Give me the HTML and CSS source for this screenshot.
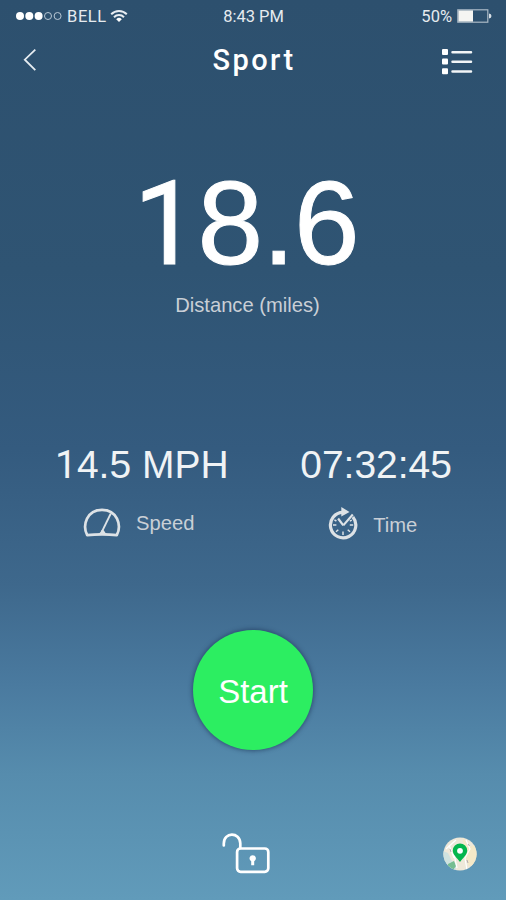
FILE: index.html
```html
<!DOCTYPE html>
<html lang="en">
<head>
    <meta charset="UTF-8">
    <meta name="viewport" content="width=device-width, initial-scale=1.0">
    <title>Sport</title>
    <link rel="stylesheet" href="styles.css">
</head>
<body>
    <div class="status-bar">
        <div class="carrier">
            <svg class="signal" viewBox="0 0 48 10">
                <g fill="#fff"><circle cx="5" cy="5" r="4"/><circle cx="14.3" cy="5" r="4"/><circle cx="23.6" cy="5" r="4"/></g>
                <g fill="none" stroke="#b9c8d5"><circle cx="33" cy="5" r="3.5"/><circle cx="42.6" cy="5" r="3.5"/></g>
            </svg>
            <span class="carrier-name">BELL</span>
            <svg class="wifi" viewBox="0 0 18 14" fill="none" stroke="#e8edf2" stroke-width="2">
                <path d="M1.2 5.2a11 11 0 0 1 15.6 0M4 8.2a7 7 0 0 1 10 0"/>
                <path d="M9 13L6.2 10.2a4 4 0 0 1 5.6 0z" fill="#fff" stroke="none"/>
            </svg>
        </div>
        <span class="clock">8:43 PM</span>
        <div class="power">
            <span>50%</span>
            <svg class="battery" viewBox="0 0 35 14">
                <rect x=".8" y=".8" width="30" height="12.4" fill="none" stroke="#aab9c6" stroke-width="1.2"/>
                <rect x="1.4" y="1.4" width="14.6" height="11.2" fill="#f5f5f2"/>
                <path d="M32 4.5a2.5 2.5 0 0 1 0 5z" fill="#d5dde4"/>
            </svg>
        </div>
    </div>

    <header>
        <svg class="back" viewBox="0 0 14 24"><path d="M12.3 1.6L1.8 11.7l10.5 10.5" fill="none" stroke="#e6ecf1" stroke-width="1.8"/></svg>
        <h1>Sport</h1>
        <svg class="menu" viewBox="0 0 31 26" fill="#fff">
            <rect x="0" y="0" width="6" height="6" rx="1"/><rect x="0" y="9.5" width="6" height="6" rx="1"/><rect x="0" y="19.2" width="6" height="6" rx="1"/>
            <path d="M10.5 3.2h18.5M10.5 12.8h18.5M10.5 22.5h18.5" stroke="#f2f5f7" stroke-width="2.5" stroke-linecap="round"/>
        </svg>
    </header>

    <main>
        <section class="distance">
            <div class="distance-value"><span class="one">1</span>8.6</div>
            <div class="label">Distance (miles)</div>
        </section>

        <section class="stats">
            <div class="stat speed">
                <div class="stat-value"><span class="one">1</span>4.5 MPH</div>
                <div class="stat-label">
                    <svg class="gauge" viewBox="0 0 38 30" fill="none" stroke="#dde2e6" stroke-width="2.7" stroke-linejoin="round">
                        <path d="M19 26.3Q11 26.3 4.2 27.2C-1 17 4 1.8 19 1.8S39 17 33.8 27.2Q27 26.3 19 26.3z"/>
                        <path d="M27.8 5.5L19 23.5" stroke-width="1.8"/>
                        <path d="M13 26.8Q17.5 25.5 18.4 22.2h2.4Q22 25.5 25.5 26.8z" fill="#dde2e6" stroke="none"/>
                    </svg>
                    <span>Speed</span>
                </div>
            </div>
            <div class="stat time">
                <div class="stat-value">07:32:45</div>
                <div class="stat-label">
                    <svg class="stopwatch" viewBox="0 0 30 34" fill="none" stroke="#dde2e6">
                        <path d="M15 5.4A12.7 12.7 0 1 0 24.9 10" stroke-width="3.2"/>
                        <path d="M13.3 0l8.2 5-8.2 4.6z" fill="#dde2e6" stroke="none"/>
                        <path d="M15.3 18.4L10.1 11.5M15.3 18.4L24.8 7.5" stroke-width="2.2"/>
                        <path d="M5 18h3.4M21.8 18h3.4M15 24.5V28M8 24.8l2.3-2M22 24.8l-2.3-2M6.4 12.8l2 1.2M23.8 13.2l-2 1" stroke-width="1.5"/>
                    </svg>
                    <span>Time</span>
                </div>
            </div>
        </section>

        <button class="start" type="button">Start</button>
    </main>

    <footer>
        <svg class="lock" viewBox="0 0 50 42" fill="none" stroke="#fff" stroke-width="2.7">
            <path d="M2.8 12.5v-2C2.8-1.3 18.8-1.3 19.3 10.2V15" stroke-linecap="round"/>
            <rect x="16.1" y="15.5" width="31.2" height="23.3" rx="3.5"/>
            <path d="M31.7 22.2a3.2 3.2 0 0 1 1.5 6v4h-3v-4a3.2 3.2 0 0 1 1.5-6z" fill="#fff" stroke="none"/>
        </svg>
        <svg class="map" viewBox="0 0 34 34">
            <clipPath id="disc"><circle cx="17" cy="17" r="16.6"/></clipPath>
            <g clip-path="url(#disc)">
                <rect width="34" height="34" fill="#eee8d9"/>
                <path d="M20 0l6 10 8-3v20l-8 2-5-9z" fill="#f5e9c8"/>
                <path d="M0 14l5 2 4 8 5 3-2 7H0z" fill="#cfe2df"/>
                <path d="M5 27l6-3 2 5-3 4-6-2z" fill="#75bd91"/>
                <path d="M3 12l10-9M23 3l4 9-5 9 2 12M11 17l3 14M6 8l5 13" fill="none" stroke="#fff" stroke-width="1.2"/>
                <path d="M25 7l1.5 2M24 23l1 3M7 12l1 3" fill="none" stroke="#b5acb2"/>
            </g>
            <path d="M17 25C14 21 9.8 17.8 9.8 13.6a7.2 7.2 0 0 1 14.4 0C24.2 17.8 20 21 17 25z" fill="#05b64d"/>
            <circle cx="17" cy="13.8" r="2.9" fill="#fff"/>
        </svg>
    </footer>
</body>
</html>
```
FILE: styles.css
```css
* {
    box-sizing: border-box;
}

body {
    margin: 0;
    width: 506px;
    height: 900px;
    overflow: hidden;
    display: flex;
    flex-direction: column;
    font-family: "Liberation Sans", Arial, sans-serif;
    color: white;
    background: linear-gradient(#2d506e 0%, #2f5473 30%, #345b7f 50%, #3e688c 65%, #4a7a9f 76%, #568cad 86%, #619bba 100%);
}

svg {
    display: block;
    flex: none;
}

.status-bar {
    height: 32px;
    padding: 0 14px 0 15px;
    display: grid;
    grid-template-columns: 1fr auto 1fr;
    align-items: center;
    font-family: Roboto, sans-serif;
    font-size: 16.5px;
    color: #e6ebef;
}

.carrier,
.power {
    display: flex;
    align-items: center;
}

.power {
    justify-content: flex-end;
    gap: 5px;
}

.carrier-name {
    letter-spacing: 0.6px;
}

.signal {
    width: 48px;
    height: 10px;
    margin-right: 4px;
}

.wifi {
    width: 18px;
    height: 14px;
    margin-left: 3px;
}

.battery {
    width: 35px;
    height: 14px;
}

header {
    height: 58px;
    padding: 0 33px 0 23px;
    display: grid;
    grid-template-columns: 1fr auto 1fr;
    align-items: center;
}

header h1 {
    margin: 0 0 2px 12px;
    font-family: Roboto, sans-serif;
    font-size: 29px;
    font-weight: 500;
    line-height: 34px;
    letter-spacing: 2.4px;
}

.back {
    width: 14px;
    height: 24px;
    margin-bottom: 2px;
}

.menu {
    width: 31px;
    height: 26px;
    justify-self: end;
    margin-top: 2px;
}

main {
    display: flex;
    flex-direction: column;
    align-items: center;
}

/* plain "1" without a foot serif */
.one {
    font-family: Roboto, sans-serif;
    line-height: 1;
}

.distance {
    padding-top: 65px;
    text-align: center;
}

.distance-value {
    height: 134px;
    font-size: 118px;
    line-height: 136px;
    letter-spacing: -1px;
    margin-right: 14px;
    -webkit-text-stroke: 1px white;
}

.distance-value .one {
    font-size: 116px;
}

.label,
.stat-label {
    font-size: 20.2px;
    line-height: 24px;
    color: #c9cfd6;
}

.label {
    margin: 4px 11px 0 0;
}

.stats {
    width: 100%;
    margin-top: 126px;
    padding: 0 54px 0 55px;
    display: flex;
    justify-content: space-between;
}

.stat-value {
    height: 44px;
    font-size: 39px;
    line-height: 44px;
    color: #f0f3f5;
}

.stat-label {
    display: flex;
    align-items: center;
}

.speed .stat-label {
    margin: 21px 0 0 28px;
    gap: 15px;
}

.time .stat-label {
    margin: 20px 0 0 28px;
    gap: 15px;
}

.time .stat-label span {
    padding-top: 2px;
}

.gauge {
    width: 38px;
    height: 30px;
}

.stopwatch {
    width: 30px;
    height: 34px;
}

.start {
    width: 120px;
    height: 120px;
    margin-top: 89px;
    padding: 3px 0 0;
    border: none;
    border-radius: 50%;
    background: #2cee61;
    box-shadow: 0 0 4px 1px rgba(30, 55, 90, 0.65);
    color: white;
    font-family: inherit;
    font-size: 33px;
}

footer {
    margin-top: auto;
    height: 70px;
    padding: 0 29px 0 221px;
    display: flex;
    justify-content: space-between;
    align-items: flex-start;
}

.lock {
    width: 50px;
    height: 42px;
    margin-top: 3px;
}

.map {
    width: 34px;
    height: 34px;
    margin-top: 7px;
}
```
